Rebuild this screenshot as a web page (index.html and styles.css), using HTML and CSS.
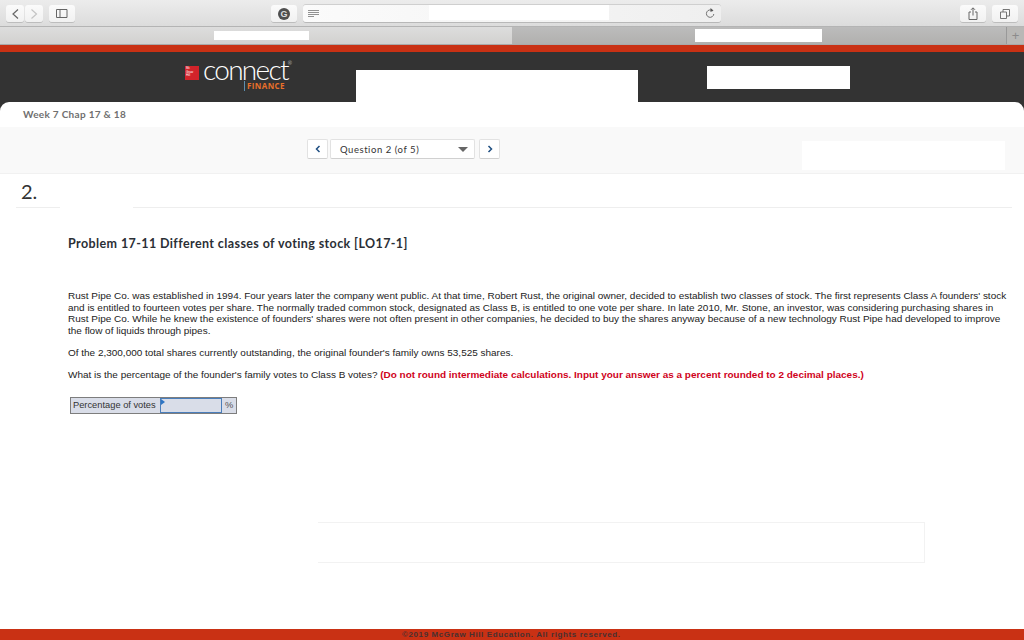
FILE: index.html
```html
<!DOCTYPE html>
<html>
  <head>
    <title>Connect Finance - Question 2</title>
    <link rel="stylesheet" href="styles.css">
  </head>
  <body>
    <div class="toolbar">
      <div class="btn-group">
        <div class="tool-btn nav-btn">
          <svg width="10" height="14" viewBox="0 0 10 14"><path d="M8 2.500 3 7l5 4.500" fill="none" stroke="#666" stroke-width="1.200"/></svg>
        </div>
        <div class="tool-btn nav-btn">
          <svg width="10" height="14" viewBox="0 0 10 14"><path d="M2.500 2.500 7.500 7l-5 4.500" fill="none" stroke="#c4c4c4" stroke-width="1.200"/></svg>
        </div>
      </div>
      <div class="tool-btn sidebar-btn">
        <svg width="12" height="9" viewBox="0 0 12 9"><path d="M.5.5h10.500v8H.5zM4 .5v8" fill="none" stroke="#666" stroke-width="1"/></svg>
      </div>
      <div class="tool-btn g-btn">
        <div class="g-icon">G</div>
      </div>
      <div class="address">
        <svg class="reader" width="11" height="8" viewBox="0 0 11 8"><path d="M0 .5h11M0 2.500h11M0 4.500h11M0 6.500h6" fill="none" stroke="#777" stroke-width=".8"/></svg>
        <div class="address-mask"></div>
        <svg class="reload" width="10" height="11" viewBox="0 0 10 11"><path d="M7.500 2.800A3.700 3.700 0 1 0 8.800 6" fill="none" stroke="#666" stroke-width=".9"/><path d="M5.500 0 8.500 2.500 5.500 4z" fill="#555"/></svg>
      </div>
      <div class="tool-btn share-btn">
        <svg width="10" height="13" viewBox="0 0 10 13"><path d="M3 5H1v7.500h8V5H7M5 8.500V1M3 2.800 5 .8l2 2" fill="none" stroke="#666" stroke-width="1"/></svg>
      </div>
      <div class="tool-btn tabs-btn">
        <svg width="10" height="10" viewBox="0 0 10 10"><path d="M.5 3h6v6.500h-6zM3 3V.5h6.500V7H6.500" fill="none" stroke="#666" stroke-width=".9"/></svg>
      </div>
    </div>

    <div class="tabbar">
      <div class="tab tab-active"><div class="tab-mask-small"></div></div>
      <div class="tab tab-back"><div class="tab-mask-large"></div></div>
      <div class="tab-add">+</div>
    </div>

    <div class="red-strip"></div>

    <div class="site-header">
      <div class="logo">
        <div class="logo-mark">Mc<br>Graw<br>Hill</div>
        <div class="logo-text">
          <div class="logo-word">connect<sup>®</sup></div>
          <div class="logo-sub">FINANCE</div>
        </div>
      </div>
      <div class="header-mask-main"></div>
      <div class="header-mask-side"></div>
    </div>

    <div class="card">
      <div class="crumb">Week 7 Chap 17 &amp; 18</div>
      <div class="question-bar">
        <div class="q-btn">
          <svg width="6" height="8" viewBox="0 0 6 8"><path d="M4.500 1 1.500 4l3 3" fill="none" stroke="#1f4f82" stroke-width="1.500"/></svg>
        </div>
        <div class="q-select">
          <span>Question 2 (of 5)</span>
          <span class="q-caret"></span>
        </div>
        <div class="q-btn q-next">
          <svg width="6" height="8" viewBox="0 0 6 8"><path d="M1.500 1l3 3-3 3" fill="none" stroke="#1f4f82" stroke-width="1.500"/></svg>
        </div>
        <div class="q-mask"></div>
      </div>

      <div class="q-number-row">
        <div class="q-number">2.</div>
        <div class="q-rule"></div>
      </div>

      <div class="problem">
        <h2>Problem 17-11 Different classes of voting stock [LO17-1]</h2>
        <p class="first">Rust Pipe Co. was established in 1994. Four years later the company went public. At that time, Robert Rust, the original owner, decided to establish two classes of stock. The first represents Class A founders' stock<br>and is entitled to fourteen votes per share. The normally traded common stock, designated as Class B, is entitled to one vote per share. In late 2010, Mr. Stone, an investor, was considering purchasing shares in<br>Rust Pipe Co. While he knew the existence of founders' shares were not often present in other companies, he decided to buy the shares anyway because of a new technology Rust Pipe had developed to improve<br>the flow of liquids through pipes.</p>
        <p>Of the 2,300,000 total shares currently outstanding, the original founder's family owns 53,525 shares.</p>
        <p>What is the percentage of the founder's family votes to Class B votes? <strong>(Do not round intermediate calculations. Input your answer as a percent rounded to 2 decimal places.)</strong></p>

        <div class="answer">
          <div class="answer-label">Percentage of votes</div>
          <div class="answer-input"></div>
          <div class="answer-unit">%</div>
        </div>
      </div>

      <div class="empty-box"></div>
    </div>

    <div class="footer">©2019 McGraw Hill Education. All rights reserved.</div>
  </body>
</html>
```

FILE: styles.css
```css
html,
body {
  margin: 0;
  padding: 0;
}

body {
  width: 1024px;
  height: 640px;
  overflow: hidden;
  background: #333;
  font-family: "Liberation Sans", Arial, sans-serif;
  display: flex;
  flex-direction: column;
}

.toolbar {
  height: 27px;
  flex: none;
  box-sizing: border-box;
  padding: 5px 6px 0;
  display: flex;
  align-items: flex-start;
  background: linear-gradient(#ececec, #dcdcdc);
  border-bottom: 1px solid #b4b4b4;
}

.btn-group {
  display: flex;
  gap: 1px;
}

.tool-btn {
  height: 17px;
  box-sizing: border-box;
  display: flex;
  align-items: center;
  justify-content: center;
  background: linear-gradient(#fbfbfb, #f1f1f1);
  border-radius: 3px;
  box-shadow: 0 1px 0 #bdbdbd;
}

.nav-btn {
  width: 18px;
}

.sidebar-btn {
  width: 26px;
  margin-left: 6px;
}

.g-btn {
  width: 26px;
  margin-left: 196px;
}

.g-icon {
  width: 12px;
  height: 12px;
  border-radius: 50%;
  background: #4f4f4f;
  color: #ddd;
  font-size: 9px;
  font-weight: bold;
  line-height: 12px;
  text-align: center;
}

.address {
  width: 418px;
  height: 17px;
  margin-left: 6px;
  padding: 0 6px 0 5px;
  box-sizing: border-box;
  display: flex;
  align-items: center;
  position: relative;
  background: linear-gradient(90deg, #fbfbfb, #efefef);
  border-radius: 3px;
  box-shadow: 0 1px 0 #b8b8b8, 0 -1px 0 #cfcfcf;
}

.address-mask {
  position: absolute;
  left: 126px;
  top: 0;
  width: 180px;
  height: 15px;
  background: #fff;
}

.reload {
  margin-left: auto;
}

.share-btn {
  width: 26px;
  margin-left: 239px;
}

.tabs-btn {
  width: 26px;
  margin-left: 6px;
}

.tabbar {
  height: 18px;
  flex: none;
  box-sizing: border-box;
  display: flex;
  border-bottom: 1px solid #a9a9a9;
}

.tab {
  display: flex;
  align-items: flex-start;
  justify-content: center;
}

.tab-active {
  width: 512px;
  background: linear-gradient(#dddddd, #d2d1cf);
}

.tab-mask-small {
  width: 95px;
  height: 9px;
  margin: 4px 0 0 11px;
  background: #fff;
}

.tab-back {
  width: 494px;
  background: linear-gradient(#bcbcbc, #b1b0ae);
  border-right: 1px solid #999;
}

.tab-mask-large {
  width: 127px;
  height: 13px;
  margin: 2px 0 0 -2px;
  background: #fff;
}

.tab-add {
  flex: 1;
  background: #b9b8b6;
  color: #8b8b8b;
  font-size: 13px;
  line-height: 17px;
  text-align: center;
}

.red-strip {
  height: 7px;
  flex: none;
  background: #c93114;
}

.site-header {
  height: 50px;
  flex: none;
  position: relative;
  background: #333;
}

.logo {
  position: absolute;
  left: 185px;
  top: 8px;
  display: flex;
  gap: 4px;
}

.logo-mark {
  width: 14px;
  height: 14px;
  margin-top: 6px;
  box-sizing: border-box;
  padding: 1px;
  background: #d2232a;
  color: #fff;
  font-size: 3px;
  line-height: 3.500px;
}

.logo-text {
  position: relative;
  width: 90px;
}

.logo-word {
  font-family: Lato, sans-serif;
  font-weight: 300;
  font-size: 28px;
  line-height: 19px;
  letter-spacing: -1.700px;
  color: #fff;
  white-space: nowrap;
}

.logo-word sup {
  font-size: 5px;
  letter-spacing: 0;
  vertical-align: 15px;
  line-height: 0;
}

.logo-sub {
  position: absolute;
  left: 41px;
  top: 21px;
  padding-left: 2px;
  border-left: 1px solid #5d8fae;
  color: #e8702a;
  font-family: "Open Sans", sans-serif;
  font-weight: 700;
  font-size: 8px;
  line-height: 10px;
  letter-spacing: .4px;
}

.header-mask-main {
  position: absolute;
  left: 356px;
  top: 18px;
  width: 282px;
  height: 32px;
  background: #fff;
}

.header-mask-side {
  position: absolute;
  left: 707px;
  top: 14px;
  width: 143px;
  height: 23px;
  background: #fff;
}

.card {
  flex: 1;
  min-height: 0;
  background: #fff;
  border-radius: 9px 9px 0 0;
  display: flex;
  flex-direction: column;
}

.crumb {
  height: 25px;
  flex: none;
  box-sizing: border-box;
  padding: 6px 0 0 23px;
  font-family: Lato, sans-serif;
  font-weight: 700;
  font-size: 10px;
  line-height: 12px;
  letter-spacing: .3px;
  color: #6f6f6f;
}

.question-bar {
  height: 47px;
  flex: none;
  box-sizing: border-box;
  padding: 12px 0 0 307px;
  display: flex;
  align-items: flex-start;
  position: relative;
  background: #f9f9f9;
  border-bottom: 1px solid #f1f1f1;
}

.q-btn {
  width: 21px;
  height: 20px;
  box-sizing: border-box;
  display: flex;
  align-items: center;
  justify-content: center;
  background: #fff;
  border: 1px solid #e2e2e2;
  border-bottom-color: #d0d0d0;
  border-radius: 2px;
}

.q-next {
  margin-left: 4px;
}

.q-select {
  width: 145px;
  height: 20px;
  margin-left: 2px;
  padding: 0 6px 0 9px;
  box-sizing: border-box;
  display: flex;
  align-items: center;
  justify-content: space-between;
  background: #fff;
  border: 1px solid #e2e2e2;
  border-bottom-color: #d0d0d0;
  border-radius: 2px;
  font-family: Lato, sans-serif;
  font-weight: 400;
  font-size: 9.500px;
  letter-spacing: .55px;
  color: #333;
}

.q-caret {
  width: 0;
  height: 0;
  border-left: 5px solid transparent;
  border-right: 5px solid transparent;
  border-top: 5px solid #666;
}

.q-mask {
  position: absolute;
  left: 802px;
  top: 14px;
  width: 203px;
  height: 29px;
  background: #fff;
}

.q-number-row {
  height: 34px;
  flex: none;
  position: relative;
}

.q-number {
  padding-left: 21px;
  font-family: Lato, sans-serif;
  font-size: 20px;
  line-height: 34px;
  color: #333;
}

.q-rule {
  position: absolute;
  left: 16px;
  right: 12px;
  bottom: 0;
  height: 1px;
  background: linear-gradient(90deg, #eee 44px, #fff 44px, #fff 117px, #eee 117px);
}

.problem {
  padding: 28px 17px 0 68px;
  font-size: 9.980px;
  line-height: 11.600px;
  color: #222;
}

.problem h2 {
  margin: 0 0 38px;
  font-family: Lato, sans-serif;
  font-weight: 700;
  font-size: 12.500px;
  line-height: 16px;
  letter-spacing: .4px;
  color: #2b2f36;
}

.problem p {
  margin: 0 0 10.400px;
  white-space: nowrap;
}

.problem strong {
  color: #d0021b;
}

.answer {
  width: 167px;
  height: 17px;
  margin: 17px 0 0 2px;
  box-sizing: border-box;
  display: flex;
  background: #d9dde8;
  border: 1px solid #7d7d7d;
  font-size: 9.300px;
  line-height: 15px;
  color: #333;
}

.answer-label {
  width: 89px;
  padding-left: 2px;
  box-sizing: border-box;
}

.answer-input {
  width: 62px;
  position: relative;
  box-sizing: border-box;
  border: 1px solid #4a7ebb;
}

.answer-input::before {
  content: "";
  position: absolute;
  left: 0;
  top: 0;
  border-top: 3px solid transparent;
  border-bottom: 3px solid transparent;
  border-left: 4px solid #2e75c4;
}

.answer-unit {
  flex: 1;
  padding-left: 3px;
  color: #555;
}

.empty-box {
  width: 607px;
  height: 41px;
  margin: 108px 0 0 318px;
  box-sizing: border-box;
  border: 1px solid #f2f2f2;
  border-left: none;
}

.footer {
  height: 11px;
  flex: none;
  padding-left: 402px;
  background: #c93114;
  color: #4a3030;
  font-size: 8px;
  font-weight: bold;
  line-height: 11px;
  letter-spacing: .6px;
}
```
